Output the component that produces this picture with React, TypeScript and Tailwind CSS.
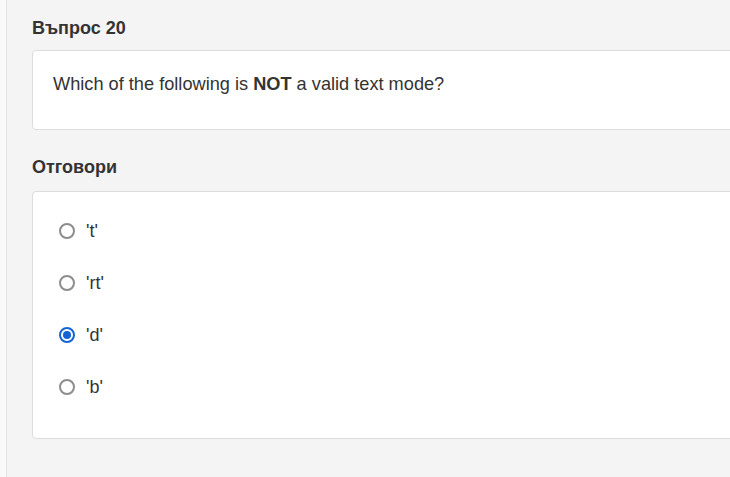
import React, { useState } from "react";

const answers = ["'t'", "'rt'", "'d'", "'b'"];

const Radio: React.FC<{ checked: boolean }> = ({ checked }) => (
  <span
    className={
      checked
        ? "flex h-4 w-4 items-center justify-center rounded-full border-2 border-[#1463d4] bg-white"
        : "flex h-4 w-4 items-center justify-center rounded-full border-2 border-[#8c8c8c] bg-white"
    }
  >
    {checked && <span className="h-2 w-2 rounded-full bg-[#1463d4]" />}
  </span>
);

export default function App() {
  const [selected, setSelected] = useState(2);

  return (
    <div className="flex h-[477px] w-[730px] overflow-hidden bg-[#f4f4f4] font-['Liberation_Sans',Arial,sans-serif] text-[#333333]">
      {/* left rail */}
      <div className="w-[7px] shrink-0 border-r border-[#e4e4e4] bg-[#f9f9f9]" />

      <div className="shrink-0 pl-[25px] pt-4">
        <h2 className="mb-[10px] text-[18px] font-bold leading-6">Въпрос 20</h2>

        <div className="w-[760px] rounded border border-[#dcdcdc] bg-white px-5 pb-[33px] pt-[21px]">
          <p className="text-[18.2px] leading-6">
            Which of the following is <b>NOT</b> a valid text mode?
          </p>
        </div>

        <h2 className="mb-3 mt-[25px] text-[18px] font-bold leading-6">Отговори</h2>

        <div className="w-[760px] rounded border border-[#dcdcdc] bg-white pb-[25px] pl-[26px] pt-[13px]">
          {answers.map((a, i) => (
            <label
              key={a}
              onClick={() => setSelected(i)}
              className="flex h-[52px] cursor-pointer items-center gap-[11px] text-[18px]"
            >
              <Radio checked={selected === i} />
              <span>{a}</span>
            </label>
          ))}
        </div>
      </div>
    </div>
  );
}
